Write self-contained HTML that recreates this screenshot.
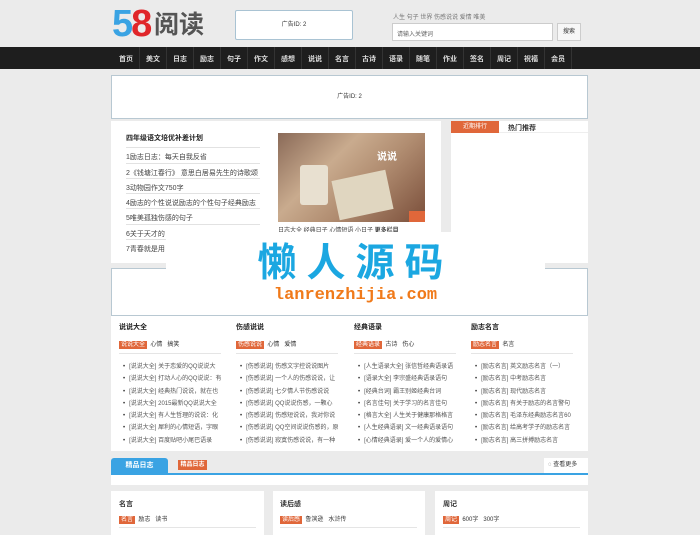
<!DOCTYPE html>
<html><head><meta charset="utf-8"><style>
*{margin:0;padding:0;box-sizing:border-box}
body{width:700px;height:535px;background:#ebebeb;font-family:"Liberation Sans","Noto Sans CJK SC",sans-serif;position:relative;overflow:hidden;color:#333;font-size:7px}
.a{position:absolute}
.w{background:#fff}
.nav{left:0;top:47px;width:700px;height:22px;background:#1e1e1e}
.nav span{position:absolute;top:7px;color:#ddd;font-size:7px;font-weight:bold}
.nav i{position:absolute;top:0;width:1px;height:22px;background:#333}
.li{left:126px;width:134px;height:15px;border-top:1px solid #e2e2e2;font-size:7px;color:#444;padding-top:4px;white-space:nowrap;overflow:hidden}
.col .t{font-weight:bold;font-size:7px;color:#222}
.tag{background:#e0673a;color:#fff;padding:1px 2px;font-size:6px}
.col ul{list-style:none}
.col li{font-size:6px;color:#555;height:12.3px;white-space:nowrap;overflow:hidden}
.col li:before{content:"•";color:#333;margin-right:4px}
</style></head><body>
<div class="a" style="left:112px;top:4px;font-size:38px;font-weight:900;line-height:40px;letter-spacing:-2px"><span style="color:#3aa3e3">5</span><span style="color:#e0262a">8</span></div>
<div class="a" style="left:154px;top:10px;font-size:25px;font-weight:bold;color:#555;line-height:30px">阅读</div>
<div class="a w" style="left:235px;top:10px;width:118px;height:30px;border:1px solid #a9c3d3;border-radius:2px;text-align:center;line-height:28px;font-size:6px">广告ID: 2</div>
<div class="a" style="left:393px;top:12px;font-size:6px;color:#777">人生 句子 世界 伤感说说 爱情 唯美</div>
<div class="a w" style="left:392px;top:23px;width:161px;height:18px;border:1px solid #ccc;font-size:6px;color:#666;padding:5px 4px">请输入关键词</div>
<div class="a" style="left:557px;top:23px;width:24px;height:18px;border:1px solid #ccc;background:#f7f7f7;font-size:6px;text-align:center;line-height:16px">搜索</div>
<div class="a nav">
<span style="left:119px">首页</span><span style="left:146px">美文</span><span style="left:173px">日志</span><span style="left:200px">励志</span><span style="left:227px">句子</span><span style="left:254px">作文</span><span style="left:281px">感想</span><span style="left:308px">说说</span><span style="left:335px">名言</span><span style="left:362px">古诗</span><span style="left:389px">语录</span><span style="left:416px">随笔</span><span style="left:443px">作业</span><span style="left:470px">签名</span><span style="left:497px">周记</span><span style="left:524px">祝福</span><span style="left:551px">会员</span>
<i style="left:139px"></i><i style="left:166px"></i><i style="left:193px"></i><i style="left:220px"></i><i style="left:247px"></i><i style="left:274px"></i><i style="left:301px"></i><i style="left:328px"></i><i style="left:355px"></i><i style="left:382px"></i><i style="left:409px"></i><i style="left:436px"></i><i style="left:463px"></i><i style="left:490px"></i><i style="left:517px"></i><i style="left:544px"></i><i style="left:571px"></i>
</div>
<div class="a w" style="left:111px;top:75px;width:477px;height:44px;border:1px solid #b8c8d2;text-align:center;line-height:42px;font-size:6px">广告ID: 2</div>
<div class="a w" style="left:111px;top:121px;width:330px;height:142px"></div>
<div class="a" style="left:126px;top:133px;font-weight:bold;font-size:7px;color:#222">四年级语文培优补差计划</div>
<div class="a li" style="top:147px">1励志日志：每天自我反省</div>
<div class="a li" style="top:163px">2《钱塘江春行》 意思白居易先生的诗歌颂</div>
<div class="a li" style="top:178px">3动物园作文750字</div>
<div class="a li" style="top:193px">4励志的个性说说励志的个性句子经典励志</div>
<div class="a li" style="top:208px">5唯美孤独伤感的句子</div>
<div class="a li" style="top:224px">6关于天才的</div>
<div class="a li" style="top:239px">7青春就是用</div>
<div class="a" style="left:278px;top:133px;width:147px;height:89px;background:linear-gradient(135deg,#8a6a58 0%,#c9ab8e 35%,#b08c70 60%,#7a4e3a 100%)"></div>
<div class="a" style="left:300px;top:165px;width:28px;height:40px;background:#e8e0d0;border-radius:3px"></div>
<div class="a" style="left:335px;top:175px;width:55px;height:40px;background:#e0d6c0;transform:rotate(-12deg)"></div>
<div class="a" style="left:377px;top:148px;font-size:10px;color:#fff;font-weight:bold">说说</div>
<div class="a" style="left:409px;top:211px;width:16px;height:11px;background:#e0673a"></div>
<div class="a" style="left:278px;top:225px;font-size:6px;color:#444">日志大全 经典日子 心情短语 小日子 <b>更多栏目</b></div>
<div class="a w" style="left:451px;top:121px;width:137px;height:142px"></div>
<div class="a" style="left:451px;top:121px;width:137px;height:12px;border-bottom:1px solid #eee"></div>
<div class="a" style="left:451px;top:121px;width:48px;height:12px;background:#e0673a;color:#fff;font-size:6px;text-align:center;line-height:12px">近期排行</div>
<div class="a" style="left:508px;top:123px;font-size:7px;font-weight:bold">热门推荐</div>
<div class="a w" style="left:111px;top:268px;width:477px;height:48px;border:1px solid #b8c8d2"></div>
<div class="a w" style="left:166px;top:232px;width:379px;height:80px"></div>
<div class="a" style="left:166px;top:240px;width:379px;text-align:center;font-size:39px;font-weight:bold;color:#1ba7e1;letter-spacing:10px;line-height:48px">懒人源码</div>
<div class="a" style="left:166px;top:286px;width:379px;text-align:center;font-family:'Liberation Mono',monospace;font-size:17px;font-weight:bold;color:#f07a1a;line-height:20px">lanrenzhijia.com</div>
<div class="a w" style="left:111px;top:316px;width:477px;height:135px"></div>
<div class="a col" style="left:119px;top:322px;width:102px">
<div class="t">说说大全</div><div style="margin-top:7px;border-bottom:1px solid #e5e5e5;padding-bottom:5px;font-size:6px"><span class="tag">说说大全</span>&nbsp; 心情 &nbsp; 搞笑</div>
<ul style="margin-top:7px;margin-left:4px"><li>[说说大全] 关于恋爱的QQ说说大</li><li>[说说大全] 打动人心的QQ说说：有</li><li>[说说大全] 经典热门说说，就在也</li><li>[说说大全] 2015最新QQ说说大全</li><li>[说说大全] 有人生哲理的说说：化</li><li>[说说大全] 犀利的心情短语，字眼</li><li>[说说大全] 百度贴吧小尾巴语录</li></ul></div>
<div class="a col" style="left:236px;top:322px;width:102px">
<div class="t">伤感说说</div><div style="margin-top:7px;border-bottom:1px solid #e5e5e5;padding-bottom:5px;font-size:6px"><span class="tag">伤感说说</span>&nbsp; 心情 &nbsp; 爱情</div>
<ul style="margin-top:7px;margin-left:4px"><li>[伤感说说] 伤感文字控说说图片</li><li>[伤感说说] 一个人的伤感说说，让</li><li>[伤感说说] 七夕情人节伤感说说</li><li>[伤感说说] QQ说说伤感，一颗心</li><li>[伤感说说] 伤感短说说，我对你说</li><li>[伤感说说] QQ空间说说伤感的，原</li><li>[伤感说说] 寂寞伤感说说，有一种</li></ul></div>
<div class="a col" style="left:354px;top:322px;width:102px">
<div class="t">经典语录</div><div style="margin-top:7px;border-bottom:1px solid #e5e5e5;padding-bottom:5px;font-size:6px"><span class="tag">经典语录</span>&nbsp; 古诗 &nbsp; 伤心</div>
<ul style="margin-top:7px;margin-left:4px"><li>[人生语录大全] 张信哲经典语录语</li><li>[语录大全] 李宗盛经典语录语句</li><li>[经典台词] 霸王别姬经典台词</li><li>[名言佳句] 关于学习的名言佳句</li><li>[格言大全] 人生关于健康那格格言</li><li>[人生经典语录] 文一经典语录语句</li><li>[心情经典语录] 爱一个人的爱情心</li></ul></div>
<div class="a col" style="left:471px;top:322px;width:102px">
<div class="t">励志名言</div><div style="margin-top:7px;border-bottom:1px solid #e5e5e5;padding-bottom:5px;font-size:6px"><span class="tag">励志名言</span>&nbsp; 名言</div>
<ul style="margin-top:7px;margin-left:4px"><li>[励志名言] 英文励志名言（一）</li><li>[励志名言] 中考励志名言</li><li>[励志名言] 现代励志名言</li><li>[励志名言] 有关于励志的名言警句</li><li>[励志名言] 毛泽东经典励志名言60</li><li>[励志名言] 给高考学子的励志名言</li><li>[励志名言] 高三拼搏励志名言</li></ul></div>
<div class="a" style="left:111px;top:473px;width:477px;height:2px;background:#3aa3e3"></div>
<div class="a" style="left:111px;top:458px;width:57px;height:16px;background:#3aa3e3;border-radius:3px 3px 0 0;color:#fff;font-weight:bold;font-size:7px;text-align:center;line-height:16px">精品日志</div>
<div class="a" style="left:178px;top:460px;width:29px;height:10px;background:#e0673a;color:#fff;font-size:6px;text-align:center;line-height:10px;font-weight:bold">精品日志</div>
<div class="a w" style="left:544px;top:458px;width:44px;height:15px;font-size:6px;line-height:15px;padding-left:4px">◌ 查看更多</div>
<div class="a w" style="left:111px;top:475px;width:477px;height:10px"></div>
<div class="a w" style="left:111px;top:491px;width:153px;height:44px"></div>
<div class="a w" style="left:273px;top:491px;width:152px;height:44px"></div>
<div class="a w" style="left:435px;top:491px;width:153px;height:44px"></div>
<div class="a" style="left:119px;top:499px;font-weight:bold">名言</div>
<div class="a" style="left:119px;top:514px;font-size:6px;width:137px;border-bottom:1px solid #e5e5e5;padding-bottom:4px"><span class="tag">名言</span>&nbsp; 励志 &nbsp; 读书</div>
<div class="a" style="left:280px;top:499px;font-weight:bold">读后感</div>
<div class="a" style="left:280px;top:514px;font-size:6px;width:137px;border-bottom:1px solid #e5e5e5;padding-bottom:4px"><span class="tag">读后感</span>&nbsp; 鲁滨逊 &nbsp; 水浒传</div>
<div class="a" style="left:443px;top:499px;font-weight:bold">周记</div>
<div class="a" style="left:443px;top:514px;font-size:6px;width:137px;border-bottom:1px solid #e5e5e5;padding-bottom:4px"><span class="tag">周记</span>&nbsp; 600字 &nbsp; 300字</div>
</body></html>
